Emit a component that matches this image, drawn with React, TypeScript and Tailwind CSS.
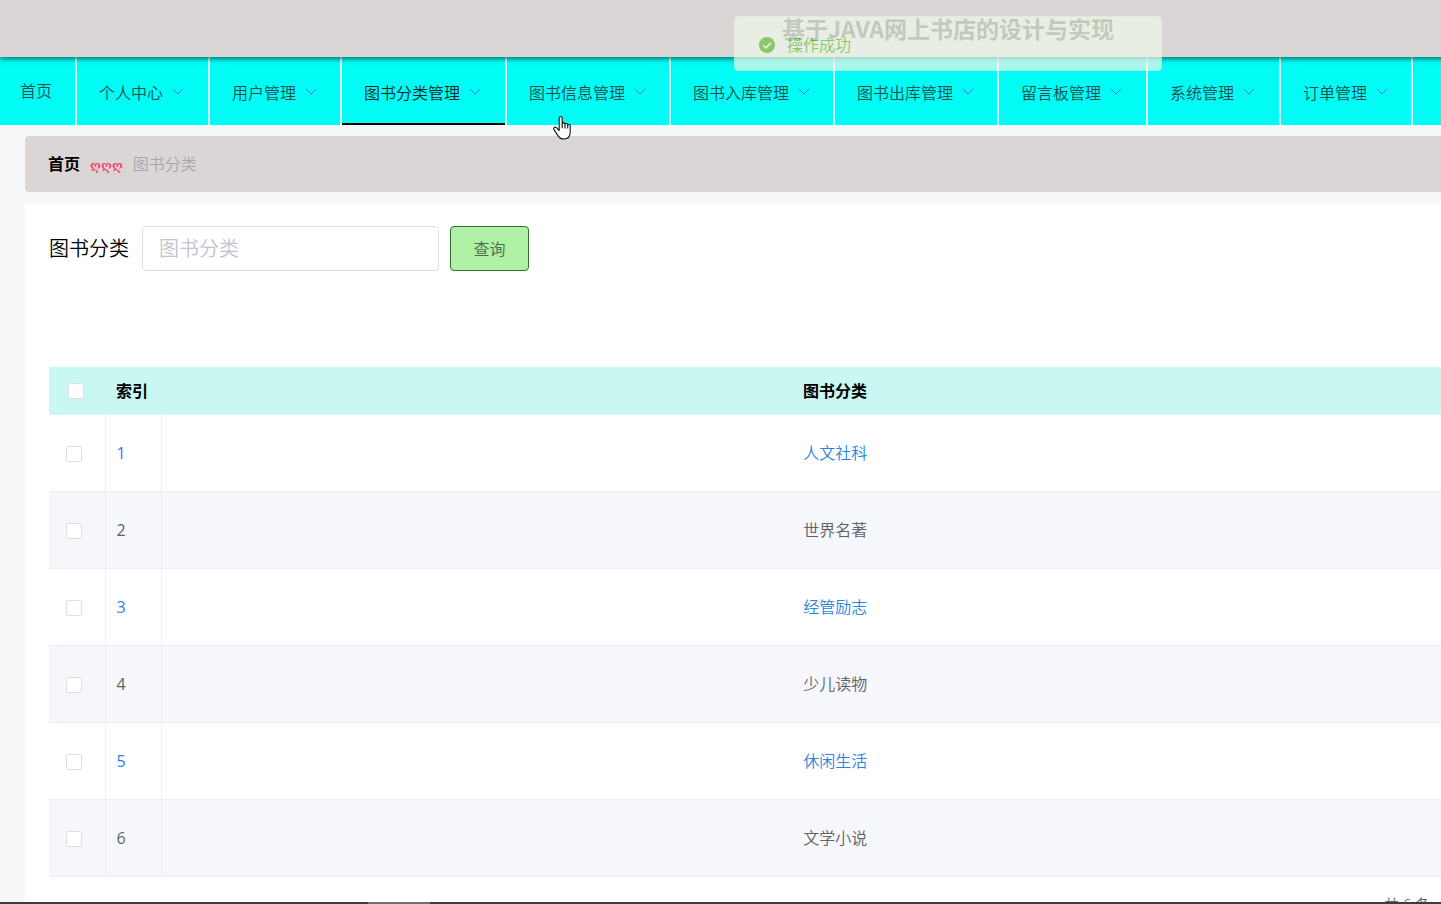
import React from "react";

type NavItem = { label: string; width: string; active?: boolean };

const navItems: NavItem[] = [
  { label: "个人中心", width: "w-[133px]" },
  { label: "用户管理", width: "w-[132px]" },
  { label: "图书分类管理", width: "w-[165px]", active: true },
  { label: "图书信息管理", width: "w-[164px]" },
  { label: "图书入库管理", width: "w-[164px]" },
  { label: "图书出库管理", width: "w-[164px]" },
  { label: "留言板管理", width: "w-[149px]" },
  { label: "系统管理", width: "w-[133px]" },
  { label: "订单管理", width: "w-[132px]" },
];

const categories = ["人文社科", "世界名著", "经管励志", "少儿读物", "休闲生活", "文学小说"];

function Chevron() {
  return (
    <svg className="mb-1 h-[7px] w-3" viewBox="0 0 12 7" fill="none" stroke="#1688e8" strokeWidth="1">
      <path d="M1 1l5 5 5-5" />
    </svg>
  );
}

function CheckBox({ label }: { label: string }) {
  return (
    <input
      type="checkbox"
      aria-label={label}
      className="block size-4 appearance-none rounded-xs border border-[#dcdfe6] bg-white checked:bg-[#409eff]"
    />
  );
}

function Message() {
  return (
    <div
      role="status"
      className="absolute top-4 left-1/2 z-20 flex h-[55px] w-[428px] -translate-x-1/2 items-center gap-3 rounded border border-[#e1f3d8] bg-[#f0f9eb] px-6 pt-0.5 opacity-70"
    >
      <svg className="size-4" viewBox="0 0 16 16">
        <circle cx="8" cy="8" r="8" fill="#67c23a" />
        <path d="M4.3 8.2l2.7 2.6 4.9-5" fill="none" stroke="#f0f9eb" strokeWidth="1.6" />
      </svg>
      <p className="text-base text-[#67c23a]">操作成功</p>
    </div>
  );
}

function Pointer() {
  return (
    <svg className="pointer-events-none absolute top-[115px] left-[552px] z-30 h-[26px] w-5" viewBox="0 0 20 26">
      <path
        d="M7.2 15.5V3.2c0-2.2 3-2.2 3 0v5.6c.3-1.3 2.7-1.2 2.8.4.6-1.1 2.6-.8 2.7.7.8-.9 2.5-.4 2.5 1.2v6.2c0 4.3-2.6 6.7-6.4 6.7-3 0-4.5-1-5.9-3.4l-4-6.2c-1-1.8 1-3.1 2.5-1.7z"
        fill="#fff"
        stroke="#111"
        strokeWidth="1.1"
        strokeLinejoin="round"
      />
      <path d="M10.2 8.8v4.4M13 9.4v4M15.7 10.2v3.4" stroke="#111" strokeWidth="1.1" />
    </svg>
  );
}

export default function App() {
  return (
    <div className="relative flex h-screen flex-col overflow-hidden bg-[#f6f8fa] font-['Open_Sans','Noto_Sans_CJK_SC',sans-serif] text-base font-[350]">
      <div className="relative w-full min-w-[1896px] flex-1">
        <header className="relative z-10 flex h-[57px] justify-center bg-[#dbd5d5] pt-3 shadow-[0_1px_6px_rgba(0,0,0,0.7)]">
          <h1 className="font-['Noto_Sans_CJK_SC',sans-serif] text-[23px] leading-8 font-bold text-[#555a50]">
            基于JAVA网上书店的设计与实现
          </h1>
        </header>

        <nav className="flex h-[68px] bg-[#00fcf4]">
          <a href="#home" className="flex w-[77px] items-center border-r-2 border-[#d5f5f5] pl-5 text-[#174f50]">
            首页
          </a>
          {navItems.map((item) => (
            <a
              key={item.label}
              href={"#" + item.label}
              className={`flex items-stretch border-r-2 border-[#d5f5f5] ${item.width}`}
            >
              <span
                className={`flex flex-1 items-center gap-[9px] border-b-2 pt-1.5 pl-[22px] whitespace-nowrap ${
                  item.active ? "border-black text-[#062526]" : "border-transparent text-[#174f50]"
                }`}
              >
                {item.label}
                <Chevron />
              </span>
            </a>
          ))}
        </nav>

        <main className="px-[25px] pt-[11px]">
          <div className="flex h-14 items-center rounded bg-[#dbd5d5] pl-[23px]">
            <a href="#home" className="font-bold text-black">
              首页
            </a>
            <span className="mx-2.5 pt-1 font-['DejaVu_Serif',serif] text-[12px] font-bold text-[#f5456f]">ღღღ</span>
            <span className="text-[#a3a7b3]">图书分类</span>
          </div>

          <section className="mt-3 bg-white px-6 pt-[22px] pb-8">
            <form className="flex h-[45px] items-stretch" onSubmit={(e) => e.preventDefault()}>
              <label htmlFor="category" className="w-[93px] self-center text-xl whitespace-nowrap text-black">
                图书分类
              </label>
              <input
                id="category"
                placeholder="图书分类"
                className="w-[297px] rounded border border-[#dcdfe6] bg-white px-4 text-xl outline-none placeholder:text-[#c0c4cc]"
              />
              <button
                type="submit"
                className="ml-[11px] w-[79px] rounded border border-[#32702f] bg-[#aff0a5] text-base text-[#4d6b4a]"
              >
                查询
              </button>
            </form>

            <table className="mt-24 w-full table-fixed border-collapse text-left">
              <colgroup>
                <col className="w-14" />
                <col className="w-14" />
                <col />
                <col className="w-[338px]" />
              </colgroup>
              <thead>
                <tr className="h-[47px] border-b border-[#ebeef5] bg-[#c9f7f1] text-black">
                  <th className="pt-0.5 pl-[19px]">
                    <CheckBox label="全选" />
                  </th>
                  <th className="pt-0.5 pl-[11px]">索引</th>
                  <th className="pt-0.5 text-center">图书分类</th>
                  <td />
                </tr>
              </thead>
              <tbody>
                {categories.map((name, i) => (
                  <tr
                    key={name}
                    className="h-[77px] border-b border-[#ebeef5] text-[#606266] odd:text-[#2a83e0] even:bg-[#f5f7fa]"
                  >
                    <td className="border-r border-[#ebeef5] pt-0.5 pl-[17px]">
                      <CheckBox label={name} />
                    </td>
                    <td className="border-r border-[#ebeef5] pl-[11px] font-normal">{i + 1}</td>
                    <td className="text-center">{name}</td>
                    <td />
                  </tr>
                ))}
              </tbody>
            </table>
            <p className="mt-4 pl-[1335px] text-[15px] text-[#606266]">共 6 条</p>
          </section>
        </main>
        <Message />
      </div>
      <Pointer />
      <div className="absolute inset-x-0 bottom-0 z-20 flex h-0.5 bg-[#3c3c42]">
        <span className="ml-[368px] w-[62px] bg-[#6c6e70]" />
      </div>
    </div>
  );
}
